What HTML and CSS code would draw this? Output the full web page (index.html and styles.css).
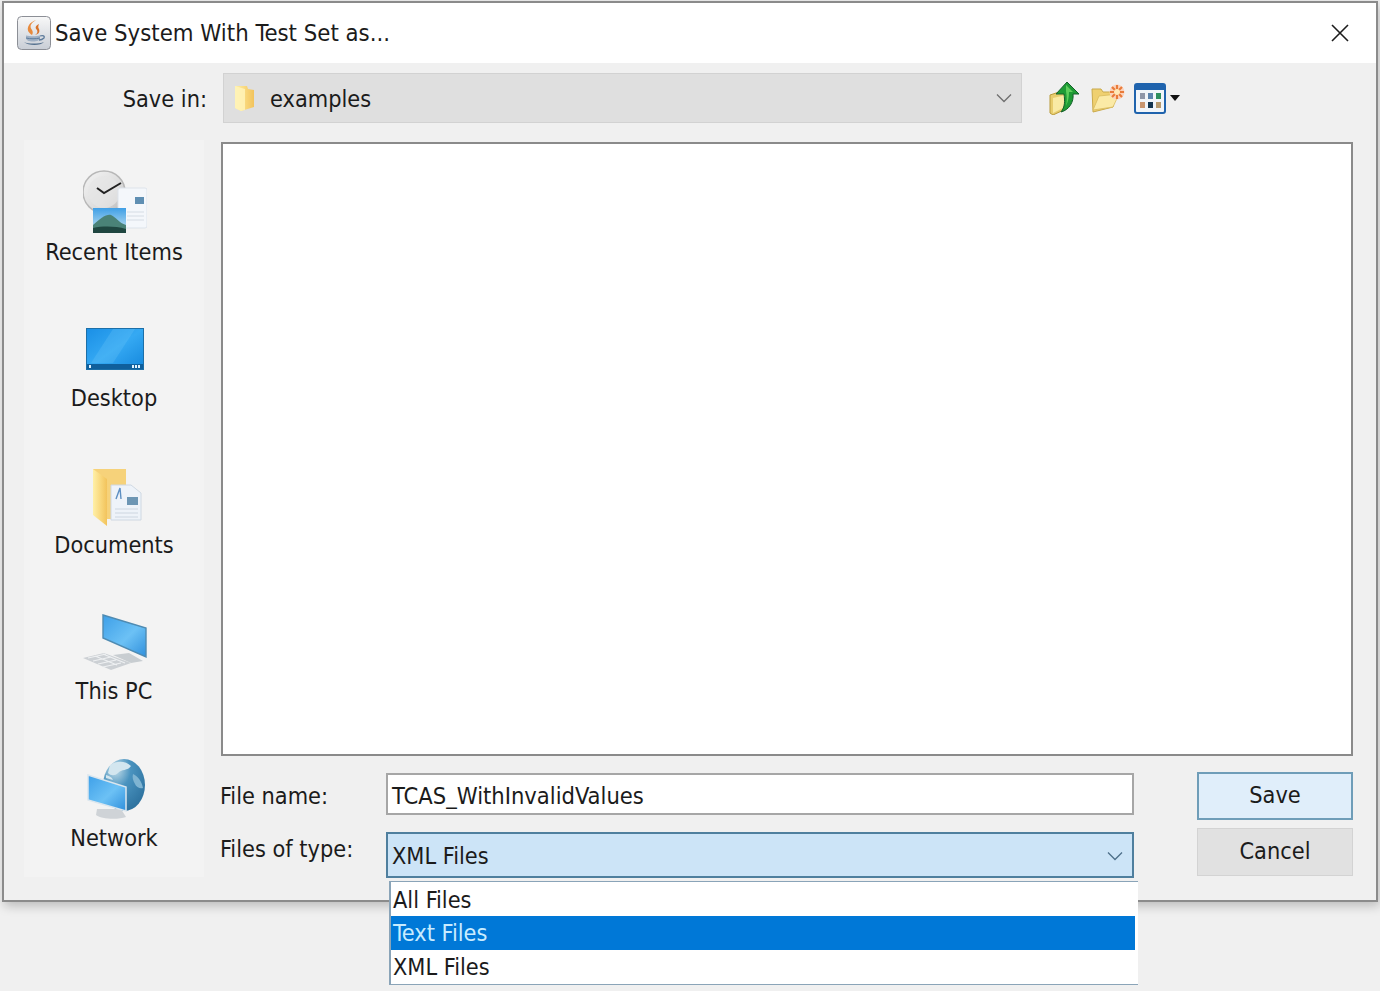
FILE: index.html
```html
<!DOCTYPE html>
<html lang="en">
<head>
<meta charset="utf-8">
<title>Save System With Test Set as...</title>
<link rel="stylesheet" href="styles.css">
</head>
<body>
<svg class="defs" width="0" height="0" aria-hidden="true">
  <defs>
    <linearGradient id="screen" x1="0" y1="0" x2="1" y2="1"><stop offset="0" stop-color="#1a8fe6"/><stop offset=".5" stop-color="#35a9f3"/><stop offset="1" stop-color="#1487dc"/></linearGradient>
    <linearGradient id="pcscreen" x1="0" y1="0" x2="1" y2="1"><stop offset="0" stop-color="#3d9fe8"/><stop offset=".55" stop-color="#6cc1f5"/><stop offset="1" stop-color="#2f8fdc"/></linearGradient>
    <linearGradient id="folder" x1="0" y1="0" x2="1" y2="0"><stop offset="0" stop-color="#fff0a8"/><stop offset=".6" stop-color="#f8d578"/><stop offset="1" stop-color="#f2c35c"/></linearGradient>
    <linearGradient id="clock" x1="0" y1="0" x2="1" y2="1"><stop offset="0" stop-color="#f4f4f4"/><stop offset=".6" stop-color="#dcdcdc"/><stop offset="1" stop-color="#b4b4b4"/></linearGradient>
    <linearGradient id="sky" x1="0" y1="0" x2="0" y2="1"><stop offset="0" stop-color="#3f9fe6"/><stop offset="1" stop-color="#cfe8f2"/></linearGradient>
    <linearGradient id="tile" x1="0" y1="0" x2="0" y2="1"><stop offset="0" stop-color="#f8f8f8"/><stop offset="1" stop-color="#c9ced6"/></linearGradient>
    <radialGradient id="globe" cx=".3" cy=".2" r=".9"><stop offset="0" stop-color="#c6dfea"/><stop offset=".4" stop-color="#4a93bf"/><stop offset="1" stop-color="#2b6f9c"/></radialGradient>
  </defs>
</svg>
<main class="dialog">
  <header class="titlebar">
    <svg class="java-icon" viewBox="0 0 34 34">
      <rect x=".5" y=".5" width="33" height="33" rx="4" fill="url(#tile)" stroke="#8c8f96"/>
      <path d="M19 4c-5 3-7 6-4 10 1 2 1 3 0 5-3-2-6-5-3-10 1-2 4-4 7-5z" fill="#e88a3c"/>
      <path d="M22 8c-4 2-4 4-2 6 1 2 0 4-2 5 4-1 5-3 4-6-1-1-1-3 0-5z" fill="#d8722a"/>
      <path d="M9 19.500c4 1 10 1 14 0v2c0 3-3 4-7 4s-7-1-7-4z" fill="#9fb0c4"/>
      <path d="M9 22c4 1 10 1 14 0" fill="none" stroke="#5e7c9c"/>
      <path d="M23 20c3-1 5 0 4 2-1 1-3 2-5 2" fill="none" stroke="#5e7c9c" stroke-width="1.300"/>
      <path d="M7 26c4 2 15 2 20 0-3 4-16 4-20 0z" fill="#54708e"/>
    </svg>
    <h1 class="title">Save System With Test Set as...</h1>
    <svg class="close-icon" viewBox="0 0 18 18"><path d="M1 1l16 16M17 1L1 17" fill="none" stroke="#1c1c1c" stroke-width="1.600"/></svg>
  </header>

  <div class="content">
    <div class="toolbar">
      <span class="toolbar-label">Save in:</span>
      <div class="location">
        <svg class="location-folder" viewBox="0 0 22 28">
          <path d="M1 2h12l1 3 6 1v17l-13 4-6-3z" fill="url(#folder)"/>
          <path d="M1 2l10 3v21l-4 1-6-3z" fill="#fff3b8" opacity=".85"/>
        </svg>
        <span class="location-text">examples</span>
        <svg class="chevron" viewBox="0 0 16 10"><path d="M1 1.500l7 7 7-7" fill="none" stroke="#6f6f6f" stroke-width="1.300"/></svg>
      </div>
      <div class="tools">
        <svg class="tool tool-up" viewBox="0 0 30 34">
          <path d="M1 14l9-3 10 1-1 15-15 7-3-2z" fill="#e8cd6e" stroke="#b89a3a"/>
          <path d="M4 17l13-3-1 12-12 6z" fill="#f9eaa4"/>
          <path d="M18 1l12 12h-6c1 8-4 16-12 18 4-5 4-11 3-18H7z" fill="#1f9c35" stroke="#14602a"/>
          <path d="M17 4l7 7h-4c0 5-1 10-3 14 1-5 1-9 0-15z" fill="#5fce5c"/>
        </svg>
        <svg class="tool tool-new" viewBox="0 0 34 30">
          <path d="M1 6h9l2 3h13l-3 15-20 5z" fill="#efd070" stroke="#c9a94a"/>
          <path d="M2 27l6-14 20-2-6 13z" fill="#fbeaa6" stroke="#d9bb5e" stroke-width=".8"/>
          <circle cx="26" cy="9" r="7.500" fill="#fbd3bd"/>
          <path d="M26 2v14M19 9h14M21 4l10 10M31 4L21 14" stroke="#e97b3a" stroke-width="2.200"/>
          <circle cx="26" cy="9" r="3" fill="#ffe9b8"/>
        </svg>
        <svg class="tool tool-view" viewBox="0 0 32 31">
          <rect x="1" y="1" width="30" height="29" rx="2" fill="#f1f5f9" stroke="#1f63ad" stroke-width="2"/>
          <rect x="1" y="1" width="30" height="6" fill="#1f63ad"/>
          <rect x="6" y="10" width="5" height="6" fill="#8f97a8"/><rect x="14" y="10" width="5" height="6" fill="#5b83ad"/><rect x="22" y="10" width="5" height="6" fill="#2e8f5e"/>
          <rect x="6" y="19" width="5" height="6" fill="#c99670"/><rect x="14" y="19" width="5" height="6" fill="#12344f"/><rect x="22" y="19" width="5" height="6" fill="#b79a6e"/>
        </svg>
        <svg class="tool-caret" viewBox="0 0 10 6"><path d="M0 0h10L5 6z" fill="#111"/></svg>
      </div>
    </div>

    <div class="main">
      <nav class="places">
        <div class="place">
          <svg class="place-icon" viewBox="0 0 64 64">
            <circle cx="21" cy="22" r="21" fill="url(#clock)" stroke="#b8b8b8" stroke-width="1.500"/>
            <circle cx="21" cy="22" r="16" fill="#e6e6e6" opacity=".7"/>
            <path d="M14 18l7 5 17-10" stroke="#222" stroke-width="2" fill="none"/>
            <rect x="35" y="18" width="29" height="40" rx="2" fill="#f4f7fb" stroke="#dde3ea"/>
            <rect x="52" y="27" width="9" height="7" fill="#5f8fb3"/>
            <path d="M44 42h17M44 46h17M44 50h17" stroke="#d5dce4"/>
            <rect x="10" y="38" width="33" height="25" fill="url(#sky)"/>
            <path d="M10 55c8-7 13-11 18-10 5 2 8 8 15 10v8H10z" fill="#4a8277"/>
            <path d="M10 58c10-2 22-2 33 1v4H10z" fill="#1f4640"/>
          </svg>
          <span class="place-label">Recent Items</span>
        </div>
        <div class="place">
          <svg class="place-icon" viewBox="0 0 64 64">
            <rect x="3.500" y="12.500" width="57" height="41" fill="url(#screen)" stroke="#1c6fa8"/>
            <path d="M30 13h22L30 47H8z" fill="#6cc6f8" opacity=".28"/>
            <rect x="4" y="48" width="56" height="5" fill="#0f5f9c"/>
            <rect x="6" y="49" width="2" height="3" fill="#dff2ff"/><rect x="49" y="49" width="2" height="3" fill="#dff2ff"/><rect x="52" y="49" width="2" height="3" fill="#dff2ff"/><rect x="55" y="49" width="2" height="3" fill="#dff2ff"/>
          </svg>
          <span class="place-label">Desktop</span>
        </div>
        <div class="place">
          <svg class="place-icon" viewBox="0 0 64 64">
            <path d="M10 6h33v50H24L10 42z" fill="#f6d27a"/>
            <path d="M10 6l14 10v47L10 52z" fill="url(#folder)"/>
            <path d="M28 22h20l10 8v27H28z" fill="#eef3f9" stroke="#cfd8e2"/>
            <path d="M33 36l4-11 1 11" fill="none" stroke="#5d8fc2" stroke-width="1.400"/>
            <rect x="44" y="34" width="11" height="8" fill="#6d96b4"/>
            <path d="M32 46h23M32 50h23M32 54h23" stroke="#cdd6e0"/>
          </svg>
          <span class="place-label">Documents</span>
        </div>
        <div class="place">
          <svg class="place-icon" viewBox="0 0 64 64">
            <path d="M30 46l18 8 12-2-14-8z" fill="#c8cdd1"/>
            <path d="M20 6l43 13v29L20 29z" fill="url(#pcscreen)" stroke="#4f8bb2" stroke-width="1.400"/>
            <path d="M0 49l21-5 27 10-20 7z" fill="#ccd0d4"/>
            <path d="M5 49l18-4M10 52l18-4M15 55l18-4M20 58l18-4M12 47l22 9M20 45l22 9" stroke="#eef0f2" stroke-width="1.200"/>
          </svg>
          <span class="place-label">This PC</span>
        </div>
        <div class="place">
          <svg class="place-icon" viewBox="0 0 64 64">
            <ellipse cx="41" cy="29" rx="21" ry="26" fill="url(#globe)"/>
            <path d="M27 9c7-5 16-4 21 1-3 5-10 3-13 7-3 3-7 3-10 0zM23 19c3 1 6 2 7 5l-7-2z" fill="#d3e6ef"/>
            <path d="M50 18c5 2 9 8 10 14-3 1-7-1-8-4-2-3-3-7-2-10z" fill="#7fb4d2"/>
            <path d="M14 53h24l5 8c-8 3-26 2-30-2z" fill="#cfd3d7"/>
            <path d="M5 19l38 12v24L5 44z" fill="url(#pcscreen)" stroke="#dbe6ee" stroke-width="1.500"/>
          </svg>
          <span class="place-label">Network</span>
        </div>
      </nav>

      <div class="workspace">
        <div class="file-pane"></div>
        <div class="form">
          <div class="fields">
            <label class="field-label">File name:</label>
            <div class="filename">TCAS_WithInvalidValues</div>
            <label class="field-label field-label-type">Files of type:</label>
            <div class="type-combo">
              <span>XML Files</span>
              <svg class="chevron" viewBox="0 0 16 10"><path d="M1 1.500l7 7 7-7" fill="none" stroke="#4d6f8a" stroke-width="1.300"/></svg>
              <ul class="popup">
                <li class="popup-item">All Files</li>
                <li class="popup-item popup-item-selected">Text Files</li>
                <li class="popup-item">XML Files</li>
              </ul>
            </div>
          </div>
          <div class="actions">
            <button class="btn btn-default">Save</button>
            <button class="btn">Cancel</button>
          </div>
        </div>
      </div>
    </div>
  </div>
</main>
</body>
</html>
```

FILE: styles.css
```css
* { box-sizing: border-box; }

html, body { margin: 0; height: 100%; }

body {
  background: #f0f0f0;
  color: #1b1b1b;
  font-family: "DejaVu Sans Condensed", "DejaVu Sans", sans-serif;
  font-size: 23.3px;
  overflow: hidden;
  padding: 1px 0 0 2px;
}

.defs { display: block; height: 0; }

.dialog {
  width: 1376px;
  height: 901px;
  background: #f0f0f0;
  border: 2px solid #8b8b8b;
  box-shadow: 2px 4px 10px rgba(0, 0, 0, .22);
}

.titlebar {
  height: 60px;
  background: #fff;
  display: flex;
  align-items: center;
  padding: 0 27px 0 13px;
}

.java-icon { width: 34px; height: 34px; flex: none; filter: blur(.4px); }

.title {
  margin: 0 0 0 4px;
  font-size: 23.7px;
  font-weight: 400;
  flex: 1;
}

.close-icon { width: 18px; height: 18px; flex: none; }

.content { padding: 10px 0 0 20px; }

.toolbar { display: flex; align-items: center; height: 50px; }

.toolbar-label { width: 183px; text-align: right; }

.location {
  margin-left: 16px;
  width: 799px;
  height: 50px;
  background: #dfdfdf;
  border: 1px solid #d2d2d2;
  display: flex;
  align-items: center;
  padding: 0 9px 0 10px;
}

.location-folder { width: 22px; height: 28px; flex: none; filter: blur(.4px); }

.location-text { margin-left: 14px; flex: 1; }

.chevron { width: 16px; height: 10px; flex: none; }

.tools { display: flex; align-items: center; margin-left: 27px; }

.tool { filter: blur(.4px); }
.tool-up { width: 30px; height: 34px; }
.tool-new { width: 34px; height: 30px; margin-left: 12px; }
.tool-view { width: 32px; height: 31px; margin-left: 9px; }
.tool-caret { width: 10px; height: 6px; margin-left: 4px; }

.main { display: flex; margin-top: 17px; }

.places {
  width: 180px;
  height: 737px;
  background: #f3f3f3;
  display: flex;
  flex-direction: column;
}

.place {
  height: 146.4px;
  padding-top: 30px;
  display: flex;
  flex-direction: column;
  align-items: center;
  flex: none;
}

.place-icon { width: 64px; height: 64px; flex: none; margin-right: -1px; filter: blur(.5px); }

.place-label { margin-top: 4px; line-height: 28px; }

.workspace { margin-left: 17px; width: 1132px; padding-top: 2px; }

.file-pane {
  height: 614px;
  background: #fff;
  border: 2px solid #8a8a8a;
}

.form { display: flex; margin-top: 16px; }

.fields {
  display: grid;
  grid-template-columns: 165px 748px;
  grid-template-rows: 42px 46px;
  row-gap: 17px;
  padding-top: 1px;
}

.field-label { align-self: center; padding-top: 3px; margin-left: -1px; }
.field-label-type { align-self: start; padding-top: 3px; }

.filename {
  background: #fff;
  border: 2px solid #a6a6a6;
  padding: 3px 0 0 4px;
  height: 42px;
  display: flex;
  align-items: center;
  font-size: 23.5px;
}

.type-combo {
  position: relative;
  background: #cce4f7;
  border: 2px solid #4f7f9e;
  display: flex;
  align-items: center;
  justify-content: space-between;
  padding: 1px 9px 0 4px;
}

.popup {
  position: absolute;
  top: 47px;
  left: 1px;
  width: 749px;
  height: 104px;
  margin: 0;
  padding: 0;
  list-style: none;
  background: #fff;
  border: 1px solid #8aa4b8;
  border-left-width: 2px;
  border-right: none;
  display: flex;
  flex-direction: column;
  justify-content: center;
}

.popup-item {
  height: 33.500px;
  line-height: 33.500px;
  padding-left: 2px;
  margin-right: 3px;
}

.popup-item-selected { background: #0078d7; color: #c8ecff; }

.actions {
  margin-left: 63px;
  width: 156px;
  display: flex;
  flex-direction: column;
  gap: 8px;
}

.btn {
  height: 48px;
  font: inherit;
  color: inherit;
  background: #e1e1e1;
  border: 1px solid #d3d3d3;
  padding: 0 0 3px;
}

.btn-default { background: #e0eefa; border: 2px solid #6f9db8; }
```
